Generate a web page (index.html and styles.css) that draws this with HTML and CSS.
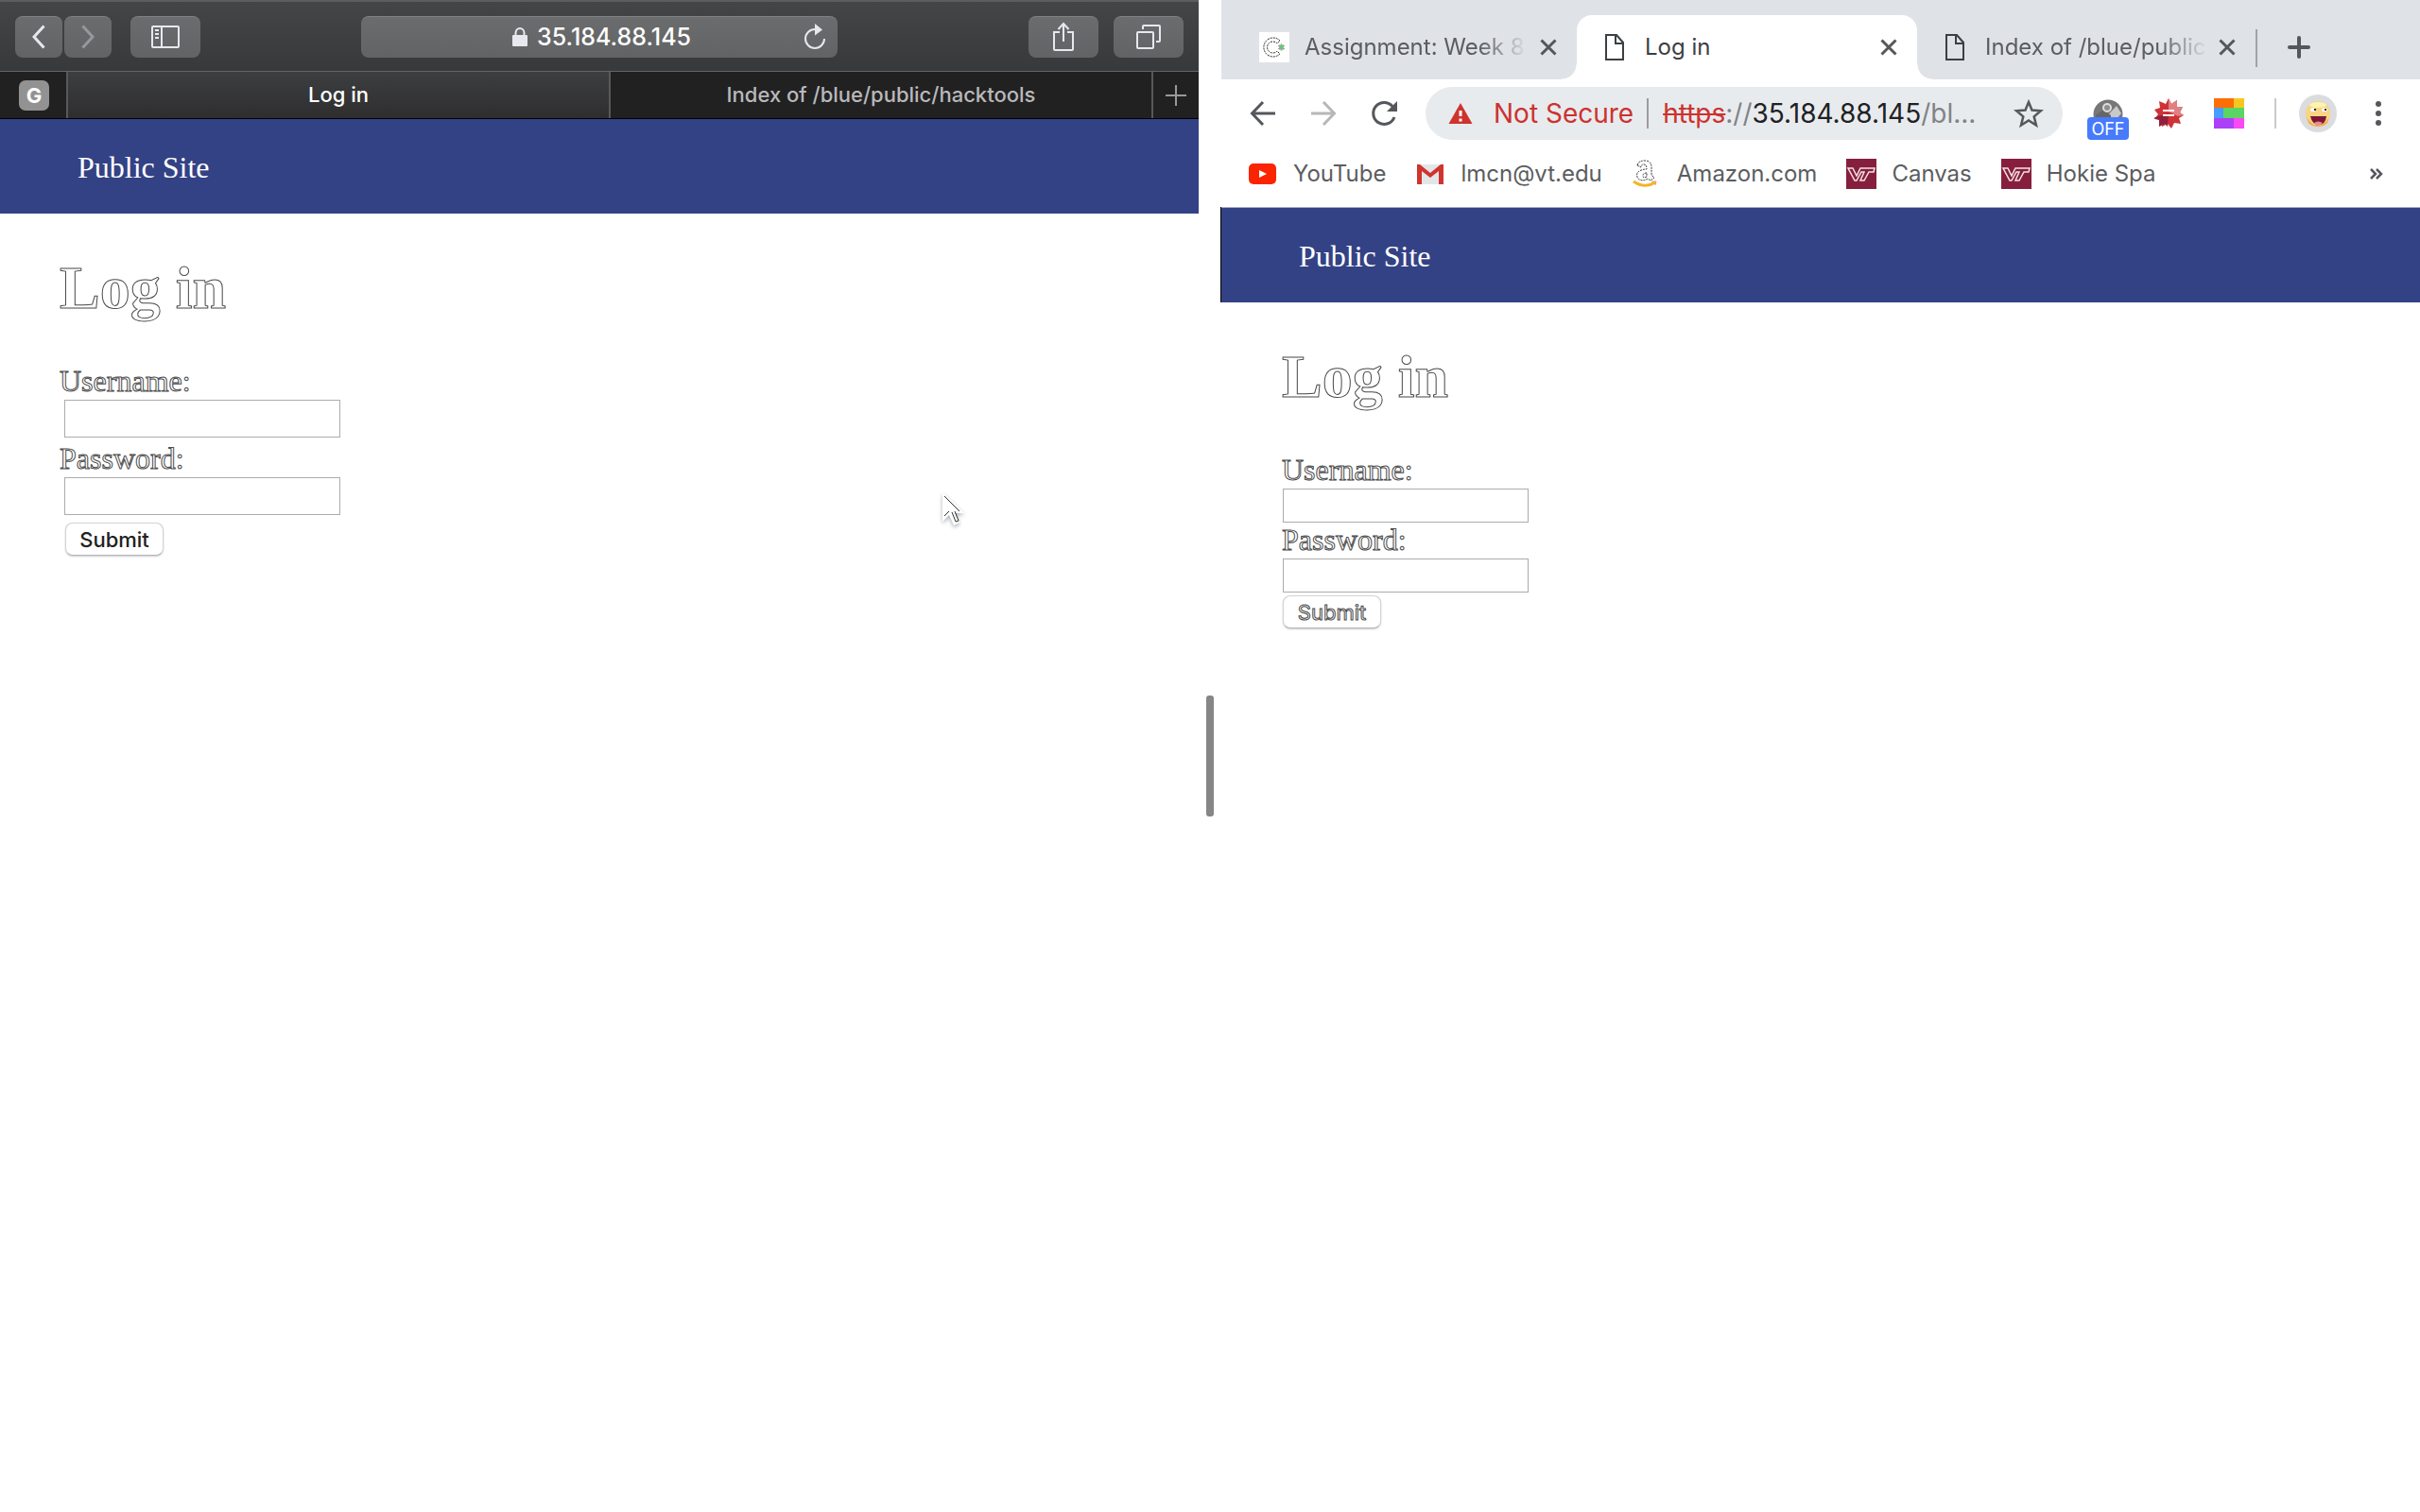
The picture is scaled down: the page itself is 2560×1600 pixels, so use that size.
FILE: index.html
```html
<!DOCTYPE html>
<html lang="en">
<head>
<meta charset="utf-8">
<title>Log in</title>
<link rel="stylesheet" href="styles.css">
</head>
<body>
<div class="split">
  <section class="window safari">
    <div class="s-toolbar">
      <div class="s-history">
        <button class="s-btn" aria-label="Back"><svg width="14" height="26" viewBox="0 0 14 26" fill="none" stroke="#e6e8ee" stroke-width="3"><path d="M12.500 1.500 2 13l10.500 11.500"/></svg></button>
        <button class="s-btn" aria-label="Forward"><svg width="14" height="26" viewBox="0 0 14 26" fill="none" stroke="#97989b" stroke-width="3"><path d="M1.500 1.500 12 13 1.500 24.500"/></svg></button>
      </div>
      <button class="s-btn s-wide s-sidebar" aria-label="Sidebar"><svg width="30" height="24" viewBox="0 0 30 24" fill="none" stroke="#e6e8ee" stroke-width="2"><rect x="1" y="1" width="28" height="22" rx="1"/><path d="M11 1v22"/><path d="M4 5h4M4 9h4M4 13h4"/></svg></button>
      <div class="s-address">
        <div class="s-location">
          <svg width="16" height="20" viewBox="0 0 16 20"><rect y="8" width="16" height="12" rx="1" fill="#e6e9ee"/><path d="M3.500 9V6a4.500 5 0 0 1 9 0v3" fill="none" stroke="#e6e9ee" stroke-width="2"/></svg>
          <input class="s-url" type="text" value="35.184.88.145" aria-label="Address">
        </div>
        <button class="s-reload" aria-label="Reload"><svg width="24" height="28" viewBox="0 0 24 28"><path d="M12 6A10 10 0 1 0 22 16" fill="none" stroke="#e6e8ee" stroke-width="2"/><path d="M12 0l8 6.500-8 6z" fill="#e6e8ee"/></svg></button>
      </div>
      <div class="s-actions">
        <button class="s-btn s-wide" aria-label="Share"><svg width="24" height="32" viewBox="0 0 24 32" fill="none" stroke="#e6e8ee" stroke-width="2"><path d="M8 11H2v18q0 1 1 1h18q1 0 1-1V11h-6M12 21V2M6.500 8 12 2l5.500 6"/></svg></button>
        <button class="s-btn s-wide" aria-label="Show all tabs"><svg width="26" height="26" viewBox="0 0 26 26" fill="none" stroke="#e6e8ee" stroke-width="2"><rect x="1" y="8" width="17" height="17" rx="1"/><path d="M7 5V2q0-1 1-1h16q1 0 1 1v15q0 1-1 1h-3"/></svg></button>
      </div>
    </div>
    <nav class="s-tabs">
      <a class="s-pin" href="#g"><span class="s-badge">G</span></a>
      <a class="s-tab s-active" href="#login">Log in</a>
      <a class="s-tab" href="#hacktools">Index of /blue/public/hacktools</a>
      <button class="s-new" aria-label="New tab"><svg width="24" height="24" viewBox="0 0 24 24" stroke="#98999b" stroke-width="2"><path d="M12 1v22M1 12h22"/></svg></button>
    </nav>
    <header class="site-bar"><a class="site-name" href="#public">Public Site</a></header>
    <main class="page page-safari">
      <h1 class="title outlined">Log in</h1>
      <form class="login">
        <label class="outlined" for="user-a">Username:</label>
        <input class="field" id="user-a" type="text">
        <label class="outlined" for="pass-a">Password:</label>
        <input class="field" id="pass-a" type="password">
        <button class="submit" type="button">Submit</button>
      </form>
    </main>
    <svg class="pointer" width="36" height="44" viewBox="0 0 36 44"><path d="M5 3v31l7-7 5 11 6-3-5-10h10z" fill="#fff"/><path d="M7 7l16 16M7 28l5-5M15 24l4 10M18 23l4 10M19 34l3-1" fill="none" stroke="#333" stroke-width="1"/></svg>
  </section>

  <div class="divider"><span class="grip"></span></div>

  <section class="window chrome">
    <nav class="c-tabs">
      <div class="c-tab">
        <svg class="icon" width="32" height="32" viewBox="0 0 32 32"><path d="M0 0h32v32H0z" fill="#fff"/><path d="M22 9A10 10 0 1 0 22 23l-3-3A6 6 0 1 1 19 12z" fill="none" stroke="#222" stroke-width="1" stroke-dasharray="2 1"/><path d="M23.500 12.500v7M20.500 14l6 4M20.500 18l6-4" stroke="#999" stroke-width="2"/><circle cx="23.500" cy="16" r="2" fill="#57d465"/></svg>
        <a class="c-label faded" href="#week8">Assignment: Week 8</a>
        <button class="c-close" aria-label="Close tab"><svg width="18" height="18" viewBox="0 0 18 18" stroke="#54575b" stroke-width="3"><path d="M1.500 1.500l15 15M16.500 1.500l-15 15"/></svg></button>
      </div>
      <div class="c-tab c-active">
        <svg class="icon" width="32" height="32" viewBox="0 0 32 32" fill="none" stroke="#3c4043" stroke-width="2"><path d="M7 3h11l7 8v18H7zM17 3v9h8"/></svg>
        <a class="c-label" href="#login">Log in</a>
        <button class="c-close" aria-label="Close tab"><svg width="18" height="18" viewBox="0 0 18 18" stroke="#54575b" stroke-width="3"><path d="M1.500 1.500l15 15M16.500 1.500l-15 15"/></svg></button>
      </div>
      <div class="c-tab c-last">
        <svg class="icon" width="32" height="32" viewBox="0 0 32 32" fill="none" stroke="#3c4043" stroke-width="2"><path d="M7 3h11l7 8v18H7zM17 3v9h8"/></svg>
        <a class="c-label faded" href="#index">Index of /blue/public</a>
        <button class="c-close" aria-label="Close tab"><svg width="18" height="18" viewBox="0 0 18 18" stroke="#54575b" stroke-width="3"><path d="M1.500 1.500l15 15M16.500 1.500l-15 15"/></svg></button>
      </div>
      <button class="c-new" aria-label="New tab"><svg width="24" height="24" viewBox="0 0 24 24" stroke="#54575b" stroke-width="4" stroke-linecap="round"><path d="M12 2v20M2 12h20"/></svg></button>
    </nav>
    <div class="c-toolbar">
      <div class="c-nav">
        <button class="c-tool" aria-label="Back"><svg width="32" height="32" viewBox="0 0 32 32" fill="none" stroke="#54575b" stroke-width="3"><path d="M29 16H5M16 4 4.500 16 16 28"/></svg></button>
        <button class="c-tool" aria-label="Forward"><svg width="32" height="32" viewBox="0 0 32 32" fill="none" stroke="#b5b7b9" stroke-width="3"><path d="M3 16h24M16 4l11.500 12L16 28"/></svg></button>
        <button class="c-tool" aria-label="Reload"><svg width="32" height="32" viewBox="0 0 32 32"><path d="M25 8.500A11.500 11.500 0 1 0 27 20" fill="none" stroke="#54575b" stroke-width="3"/><path d="M30 3v11H19z" fill="#54575b"/></svg></button>
      </div>
      <div class="omnibox">
        <svg class="icon" width="26" height="24" viewBox="0 0 26 24"><path d="M13 1l12.500 22H.5z" fill="#cf332e"/><path d="M13 9v6M13 17.500v3" stroke="#fff" stroke-width="3"/></svg>
        <span class="warning">Not Secure</span>
        <span class="rule"></span>
        <div class="address" role="textbox" aria-label="Address and search bar" tabindex="0"><s class="scheme">https</s>://<span class="host">35.184.88.145</span>/bl...</div>
        <button class="c-tool" aria-label="Bookmark this page"><svg width="32" height="32" viewBox="0 0 32 32" fill="none" stroke="#54575b" stroke-width="2.500"><path d="M16 4l3.500 8.500 9.500.7-7.300 6.200 2.300 9.100-8-5-8 5 2.300-9.100L3 13.200l9.500-.7z"/></svg></button>
      </div>
      <div class="extensions">
        <button class="c-tool ext" aria-label="Proxy switch"><svg width="32" height="32" viewBox="0 0 32 32"><circle cx="16" cy="17" r="15.500" fill="#777"/><path d="M10 24L25 8l5 8-10 12z" fill="#c9c9c9"/><path d="M3 18l8-6 8 6v8H3z" fill="#666"/><circle cx="15" cy="10" r="4" fill="#8f8f8f" stroke="#ddd" stroke-width="2"/></svg><span class="off">OFF</span></button>
        <button class="c-tool" aria-label="Red star extension"><svg width="32" height="32" viewBox="0 0 32 32"><path d="M16 0l3 6 6-4v7l6 0-3 6 4 3-5 3 2 6-7-1-3 6-4-5-6 3 0-7-8-1 4-5-4-5 6-2-1-7 7 3z" fill="#cf3338"/><path d="M16 0l3 6 6-4v7l6 0-3 6 4 3-6 1-10-5z" fill="#e08082"/><path d="M5 19l11-3-1 14-3-3-6 3 0-7-6-2z" fill="#92203c"/><path d="M10 13h12M10 18h12" stroke="#fff" stroke-width="2"/></svg></button>
        <button class="c-tool" aria-label="Colour blocks extension"><svg width="32" height="32" viewBox="0 0 32 32"><path d="M0 0h21v10H0z" fill="#ff6d05"/><path d="M21 0h11v10H21z" fill="#f6c81f"/><path d="M0 10h10v11H0z" fill="#479cff"/><path d="M10 10h22v11H10z" fill="#5bd564"/><path d="M0 21h21v11H0z" fill="#ab40f7"/><path d="M21 21h11v11H21z" fill="#fb48f5"/></svg></button>
        <span class="rule light"></span>
        <button class="c-tool face" aria-label="Profile"><svg width="40" height="40" viewBox="0 0 40 40"><circle cx="20" cy="20" r="20" fill="#dadce0"/><circle cx="20" cy="20" r="13" fill="#f7d583"/><path d="M8 24q5 9 12 9t12-9l-2 6q-4 4-10 4T10 30z" fill="#f5a932"/><ellipse cx="20" cy="11" rx="9" ry="3" fill="#fff3b0"/><path d="M12 23h17q-1 9-8 9t-9-9z" fill="#7d1535"/><path d="M16 30q4-3 9 0-2 3-5 3t-4-3z" fill="#e98b91"/><ellipse cx="15" cy="16" rx="3" ry="2" fill="#fff"/><ellipse cx="27" cy="16" rx="3" ry="2" fill="#fff"/><path d="M16 15h2v2h-2zM27 15h2v2h-2z" fill="#222"/></svg></button>
        <button class="c-tool menu" aria-label="Menu"><svg width="32" height="32" viewBox="0 0 32 32" fill="#54575b"><circle cx="16" cy="6" r="3"/><circle cx="16" cy="16" r="3"/><circle cx="16" cy="26" r="3"/></svg></button>
      </div>
    </div>
    <nav class="bookmarks">
      <a class="bookmark" href="#youtube"><svg class="icon" width="32" height="32" viewBox="0 0 32 32"><rect x="1" y="5" width="29" height="22" rx="5" fill="#fa2400"/><path d="M12 12v8l8-4z" fill="#fff"/></svg>YouTube</a>
      <a class="bookmark" href="#mail"><svg class="icon" width="32" height="32" viewBox="0 0 32 32"><path d="M2 6h28v21H2z" fill="#e3e6e9"/><path d="M2 27V6h3l11 9 11-9h3v21h-5V13l-9 7-9-7v14z" fill="#d0342e"/></svg>lmcn@vt.edu</a>
      <a class="bookmark" href="#amazon"><svg class="icon" width="32" height="32" viewBox="0 0 32 32" fill="none"><path d="M6 7q1-5 8-5t7 7v8l3 3-4 3-3-2q-4 3-9 1-5-5 0-9 4-2 8-2 0-5-3-5t-3 3zM16 15q-4 0-4 3t4 1z" stroke="#333" stroke-width="1" stroke-dasharray="2 1"/><path d="M2 24q12 8 23 1" stroke="#f5b425" stroke-width="3"/><path d="M21 24h5l-1 4" stroke="#e59b70" stroke-width="1"/></svg>Amazon.com</a>
      <a class="bookmark" href="#canvas"><svg class="icon" width="32" height="32" viewBox="0 0 32 32"><path d="M0 0h32v32H0z" fill="#861f3d"/><path d="M2 10h5l4 8 4-8h15l-1 4h-5l-5 9h-4l4-9h-3l-5 9H9z" fill="#861f3d" stroke="#f4e3e3" stroke-width="1.500"/></svg>Canvas</a>
      <a class="bookmark" href="#hokiespa"><svg class="icon" width="32" height="32" viewBox="0 0 32 32"><path d="M0 0h32v32H0z" fill="#861f3d"/><path d="M2 10h5l4 8 4-8h15l-1 4h-5l-5 9h-4l4-9h-3l-5 9H9z" fill="#861f3d" stroke="#f4e3e3" stroke-width="1.500"/></svg>Hokie Spa</a>
      <button class="c-tool more" aria-label="More bookmarks"><svg width="14" height="12" viewBox="0 0 14 12" fill="none" stroke="#54575b" stroke-width="2.500"><path d="M1 1l5 5-5 5M7 1l5 5-5 5"/></svg></button>
    </nav>
    <header class="site-bar site-bar-chrome"><a class="site-name" href="#public">Public Site</a></header>
    <main class="page page-chrome">
      <h1 class="title outlined">Log in</h1>
      <form class="login">
        <label class="outlined" for="user-b">Username:</label>
        <input class="field" id="user-b" type="text">
        <label class="outlined" for="pass-b">Password:</label>
        <input class="field" id="pass-b" type="password">
        <button class="submit outlined" type="button">Submit</button>
      </form>
    </main>
  </section>
</div>
</body>
</html>
```
FILE: styles.css
```css
* { box-sizing: border-box; }
body { margin: 0; background: #fff; font-family: Inter, "Liberation Sans", sans-serif; }
a { color: inherit; text-decoration: none; }
button, input { font: inherit; color: inherit; padding: 0; margin: 0; border: 0; background: none; }
button { display: flex; align-items: center; justify-content: center; }
svg { display: block; flex: none; }

.split { display: flex; min-height: 100vh; }
.window { flex: 1 1 0; min-width: 0; position: relative; }
.divider { flex: none; width: 24px; display: flex; align-items: center; justify-content: center; }
.grip { width: 8px; height: 128px; border-radius: 3px; background: #868686; }

/* Safari */
.s-toolbar { display: flex; align-items: center; height: 76px; padding: 0 16px; background: linear-gradient(#444547, #38393b); border-top: 2px solid #5b5d5f; border-bottom: 1px solid #626466; }
.s-history { display: flex; gap: 2px; }
.s-btn { width: 50px; height: 44px; border-radius: 8px; background: linear-gradient(#6b6c6e, #626365); border-top: 1px solid #808183; }
.s-wide { width: 74px; }
.s-sidebar { margin-left: 20px; }
.s-address { flex: none; width: 504px; height: 44px; margin: 0 auto 0 170px; display: grid; grid-template-columns: 1fr auto; align-items: center; border-radius: 8px; background: linear-gradient(#6b6c6e, #626365); border-top: 1px solid #808183; padding-right: 12px; }
.s-location { display: flex; align-items: center; gap: 10px; padding-left: 160px; }
.s-url { width: 180px; color: #fff; font-size: 25px; font-weight: 500; }
.s-actions { display: flex; gap: 16px; }
.s-tabs { display: flex; height: 50px; background: #212122; border-bottom: 1px solid #000; font-size: 22px; font-weight: 500; color: #b9b9ba; }
.s-pin { width: 70px; padding-left: 2px; display: flex; align-items: center; justify-content: center; }
.s-badge { width: 32px; height: 32px; border-radius: 7px; background: #929292; color: #fff; font-weight: 700; line-height: 32px; text-align: center; }
.s-tab { flex: 1; display: flex; align-items: center; justify-content: center; padding-bottom: 2px; border-left: 2px solid #58595a; }
.s-active { color: #fff; background: linear-gradient(#3d3e40, #2e2e2f); }
.s-new { width: 50px; border-left: 2px solid #58595a; }

/* Site */
.site-bar { height: 100px; padding: 2px 82px 0; display: flex; align-items: center; background: #334285; color: #fff; font: 32px/36px "Liberation Serif", serif; }
.page { padding: 43px 64px; font: 32px/36px "Liberation Serif", serif; }
.page-safari { padding-left: 63px; }
.title { margin: 0 0 44px; font-size: 64px; line-height: 72px; }
.outlined { color: #fff; -webkit-text-stroke: 1px #4a4a4a; }
.login { display: flex; flex-direction: column; align-items: flex-start; }
.field { width: 292px; height: 40px; margin: 2px 0 4px 5px; border: 1px solid #acacac; background: #fff; }
.submit { width: 104px; height: 35px; margin: 4px 0 0 6px; border: 1px solid #d0d3d8; border-bottom-color: #b4b6ba; border-radius: 8px; background: #fff; box-shadow: 0 1px 2px #ccc; font: 500 22px/32px Inter, "Liberation Sans", sans-serif; color: #222; }
.page-chrome .field { width: 260px; height: 36px; margin: 2px 0 0 1px; }
.page-chrome .submit { margin: 3px 0 0 1px; color: #fff; font-weight: 400; }
.pointer { position: absolute; left: 992px; top: 518px; filter: drop-shadow(0 2px 2px #aab0b8); }

/* Chrome */
.c-tabs { display: flex; align-items: stretch; height: 84px; padding: 16px 28px 0 16px; background: #dfe2e7; color: #5b5d60; font-size: 24px; }
.c-tab { position: relative; flex: 0 1 360px; min-width: 0; display: flex; align-items: center; padding: 0 21px 0 24px; }
.c-label { flex: 1; min-width: 0; margin: 0 15px 0 16px; overflow: hidden; white-space: nowrap; line-height: 32px; }
.faded { -webkit-mask-image: linear-gradient(to right, #000 184px, transparent 236px); mask-image: linear-gradient(to right, #000 184px, transparent 236px); }
.c-active { background: #fff; color: #3c4043; border-radius: 16px 16px 0 0; }
.c-active::before, .c-active::after { content: ""; position: absolute; bottom: 0; width: 16px; height: 16px; }
.c-active::before { left: -16px; background: radial-gradient(circle at 0 0, transparent 15px, #fff 16px); }
.c-active::after { right: -16px; background: radial-gradient(circle at 100% 0, transparent 15px, #fff 16px); }
.c-last { padding-right: 23px; }
.c-last .c-label { margin-right: 13px; }
.c-last::after { content: ""; position: absolute; right: 0; top: 15px; width: 2px; height: 40px; background: #a0a2a5; }
.c-new { width: 88px; }
.c-toolbar { display: flex; align-items: center; height: 72px; padding: 0 28px; background: #fff; }
.c-tool { min-width: 32px; height: 32px; }
.c-nav { display: flex; gap: 32px; }
.omnibox { flex: 1; min-width: 0; height: 56px; margin: 0 32px 0 28px; padding: 0 20px 0 24px; display: flex; align-items: center; border-radius: 28px; background: #e8ebee; font-size: 28px; color: #808386; white-space: nowrap; }
.warning { margin-left: 22px; color: #cc322e; }
.rule { width: 2px; height: 32px; margin: 0 15px 0 14px; background: #9a9c9f; }
.address { flex: 1; min-width: 0; overflow: hidden; }
.scheme { color: #cc322e; }
.host { color: #202124; }
.extensions { display: flex; align-items: center; gap: 32px; }
.light { margin: 0; background: #c8cacc; }
.ext { position: relative; }
.off { position: absolute; left: -6px; top: 20px; width: 44px; height: 24px; border-radius: 4px; background: #477bfb; color: #fff; font-size: 18px; line-height: 26px; text-align: center; }
.face { margin-left: -8px; }
.menu { margin-left: -4px; }
.bookmarks { display: flex; align-items: center; gap: 31px; height: 63px; padding: 0 30px 8px 28px; font-size: 24px; color: #5b5d60; }
.bookmark { display: flex; align-items: center; gap: 16px; }
.more { margin-left: auto; }
.site-bar-chrome { height: 101px; border-top: 1px solid #a7adc9; box-shadow: -1px 0 0 #000; }
```
